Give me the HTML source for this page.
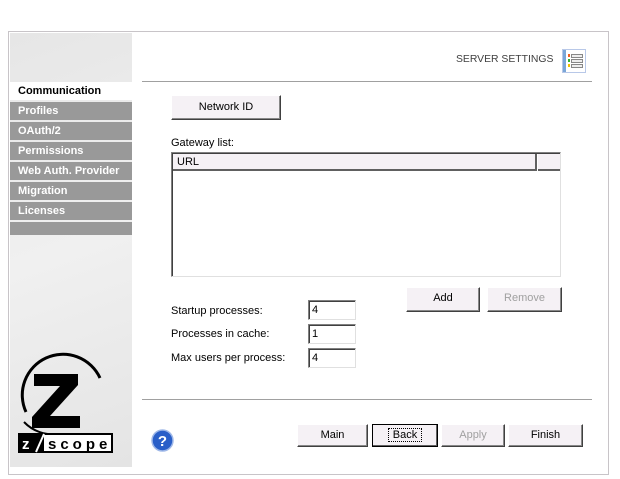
<!DOCTYPE html>
<html><head><style>
*{margin:0;padding:0;box-sizing:border-box}
body{width:620px;height:479px;background:#fff;font-family:Tahoma,"Liberation Sans",sans-serif;font-size:11px;color:#000;position:relative;overflow:hidden}
.a{position:absolute}
.frame{left:8px;top:31px;width:601px;height:444px;border:1px solid #c8c4c8}
.left{left:10px;top:33px;width:122px;height:434px;background:linear-gradient(160deg,#e6e6e6,#f0f0f0 50%,#e4e4e4)}
.nav{left:10px;width:122px;height:18px;background:#999;color:#fff;font-weight:bold;padding-left:8px;line-height:19px;font-size:11px}
.btn{background:#f5f1f5;border:1px solid;border-color:#fff #404040 #404040 #fff;box-shadow:inset -1px -1px 0 #888;text-align:center;line-height:21px}
.dis{color:#a0a0a0}
.inp{width:48px;height:20px;border:1px solid;border-color:#808080 #e0e0e0 #e0e0e0 #808080;box-shadow:inset 1px 1px 0 #404040;padding-left:3px;line-height:18px;background:#fff}
.hr{height:1px;background:#a0a0a0;left:142px;width:450px}
</style></head><body>
<div class="a frame"></div>
<div class="a left"></div>
<div class="a nav" style="top:82px;background:#fff;color:#000">Communication</div>
<div class="a nav" style="top:102px">Profiles</div>
<div class="a nav" style="top:122px">OAuth/2</div>
<div class="a nav" style="top:142px">Permissions</div>
<div class="a nav" style="top:162px">Web Auth. Provider</div>
<div class="a nav" style="top:182px">Migration</div>
<div class="a nav" style="top:202px">Licenses</div>
<div class="a nav" style="top:222px;height:13px"></div>
<svg class="a" style="left:18px;top:352px" width="96" height="102">
<path d="M8 60 A40 40 0 0 1 82 26" fill="none" stroke="#000" stroke-width="3"/>
<path d="M6 70 A40 40 0 0 0 40 82" fill="none" stroke="#000" stroke-width="2"/>
<path d="M16 22 H60 V33 L32 64 H62 V76 H14 V65 L42 34 H16Z" fill="#000"/>
<rect x="0" y="81" width="95" height="20" fill="#000"/>
<text x="4" y="97" fill="#fff" font-family="Liberation Sans" font-weight="bold" font-size="15">z</text>
<path d="M18 100 L26 82" stroke="#fff" stroke-width="2"/>
<rect x="26" y="83" width="67" height="16" fill="#fff"/>
<text x="30" y="97" fill="#000" font-family="Liberation Sans" font-weight="bold" font-size="15" letter-spacing="4">scope</text>
</svg>
<div class="a" style="left:456px;top:54px;color:#404040;font-size:10.4px">SERVER SETTINGS</div>
<svg class="a" style="left:562px;top:49px" width="24" height="24">
<rect x="0.5" y="0.5" width="23" height="23" fill="#fff" stroke="#b8c8e8"/>
<rect x="1" y="1" width="3" height="22" fill="#7aa6d8"/>
<rect x="6" y="5" width="2" height="3" fill="#f06020"/><rect x="6" y="10" width="2" height="3" fill="#30b030"/><rect x="6" y="15" width="2" height="3" fill="#f0c000"/>
<rect x="9.5" y="5.5" width="11" height="3" fill="#eee" stroke="#888"/><rect x="9.5" y="10.5" width="11" height="3" fill="#eee" stroke="#888"/><rect x="9.5" y="15.5" width="11" height="3" fill="#eee" stroke="#888"/>
</svg>
<div class="a hr" style="top:81px"></div>
<div class="a btn" style="left:171px;top:95px;width:110px;height:25px;line-height:23px">Network ID</div>
<div class="a" style="left:171px;top:137px">Gateway list:</div>
<div class="a" style="left:171px;top:152px;width:390px;height:125px;border:1px solid;border-color:#808080 #e0e0e0 #e0e0e0 #808080;box-shadow:inset 1px 1px 0 #404040;background:#fff"></div>
<div class="a" style="left:173px;top:154px;width:364px;height:17px;background:#f5f1f5;border-right:2px solid #606060;border-bottom:2px solid #606060;padding-left:4px;line-height:16px">URL</div>
<div class="a" style="left:538px;top:154px;width:22px;height:17px;background:#f5f1f5;border-bottom:2px solid #606060"></div>
<div class="a btn" style="left:406px;top:287px;width:74px;height:25px">Add</div>
<div class="a btn dis" style="left:487px;top:287px;width:75px;height:25px">Remove</div>
<div class="a" style="left:171px;top:305px">Startup processes:</div>
<div class="a" style="left:171px;top:328px">Processes in cache:</div>
<div class="a" style="left:171px;top:352px">Max users per process:</div>
<div class="a inp" style="left:308px;top:300px">4</div>
<div class="a inp" style="left:308px;top:324px">1</div>
<div class="a inp" style="left:308px;top:348px">4</div>
<div class="a hr" style="top:399px"></div>
<svg class="a" style="left:151px;top:429px" width="23" height="23"><circle cx="11.5" cy="11.5" r="10.5" fill="#2a5fc8" stroke="#9fb8e8" stroke-width="1.5"/><text x="11.5" y="17" text-anchor="middle" fill="#fff" font-family="Liberation Sans" font-weight="bold" font-size="15">?</text></svg>
<div class="a btn" style="left:297px;top:424px;width:71px;height:23px">Main</div>
<div class="a btn" style="left:372px;top:424px;width:66px;height:23px;border:1px solid #000;box-shadow:inset -1px -1px 0 #606060"><span style="outline:1px dotted #000;padding:0 4px">Back</span></div>
<div class="a btn dis" style="left:441px;top:424px;width:64px;height:23px">Apply</div>
<div class="a btn" style="left:508px;top:424px;width:75px;height:23px">Finish</div>
</body></html>
